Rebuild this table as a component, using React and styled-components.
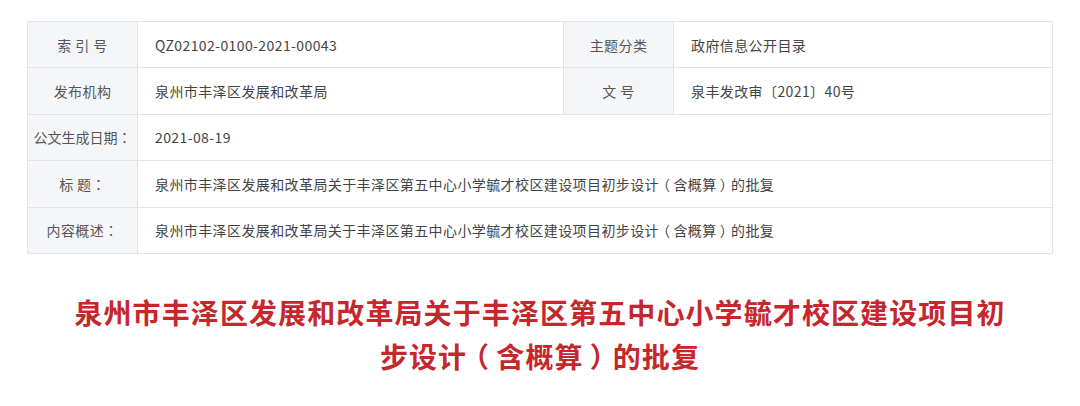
import React from "react";
import styled, { createGlobalStyle } from "styled-components";

const GlobalStyle = createGlobalStyle`
  html, body {
    margin: 0;
    padding: 0;
    background: #fff;
  }
  body {
    font-family: "Noto Sans CJK SC", "Open Sans", sans-serif;
  }
`;

const Page = styled.div`
  padding: 21px 27px 0 27px;
  width: 1080px;
  box-sizing: border-box;
`;

const Table = styled.div`
  display: grid;
  grid-template-columns: 110px 426px 110px 1fr;
  border-top: 1px solid #e4e4e4;
  border-left: 1px solid #e4e4e4;
  width: 1026px;
  box-sizing: border-box;
`;

const Cell = styled.div`
  height: 46.4px;
  box-sizing: border-box;
  display: flex;
  align-items: center;
  border-right: 1px solid #e4e4e4;
  border-bottom: 1px solid #e4e4e4;
  font-size: 14px;
  letter-spacing: 0.4px;
  white-space: nowrap;
  grid-column: ${(p) => (p.$span ? `span ${p.$span}` : "auto")};
`;

const Label = styled(Cell)`
  justify-content: center;
  background: #f5f6f7;
  color: #555;
  letter-spacing: ${(p) => (p.$tight ? "0" : "0.4px")};
`;

const Value = styled(Cell)`
  padding-left: 17px;
  color: #444;
`;

const Title = styled.h1`
  margin: 36px auto 0;
  width: 940px;
  text-align: center;
  color: #c5272d;
  font-size: 28px;
  letter-spacing: 1.1px;
  line-height: 44px;
  font-weight: 700;
`;

// full-width colon centred in its box, as in the reference
const Colon = styled.span`
  font-family: "Noto Sans CJK TC", "Noto Sans CJK SC", sans-serif;
`;

// full-width brackets drawn in the middle of their box
const Paren = styled.span`
  margin-left: ${(p) => (p.$close ? "0.22em" : "-0.22em")};
  margin-right: ${(p) => (p.$close ? "-0.22em" : "0.22em")};
`;

const TitleText = () => (
  <>
    泉州市丰泽区发展和改革局关于丰泽区第五中心小学毓才校区建设项目初步设计<Paren>（</Paren>含概算<Paren $close>）</Paren>的批复
  </>
);

export default function App() {
  return (
    <Page>
      <GlobalStyle />
      <Table>
        <Label>索 引 号</Label>
        <Value>QZ02102-0100-2021-00043</Value>
        <Label>主题分类</Label>
        <Value>政府信息公开目录</Value>

        <Label>发布机构</Label>
        <Value>泉州市丰泽区发展和改革局</Value>
        <Label>文 号</Label>
        <Value>泉丰发改审〔2021〕40号</Value>

        <Label $tight>公文生成日期<Colon>：</Colon></Label>
        <Value $span={3}>2021-08-19</Value>

        <Label>标 题<Colon>：</Colon></Label>
        <Value $span={3}><TitleText /></Value>

        <Label>内容概述<Colon>：</Colon></Label>
        <Value $span={3}><TitleText /></Value>
      </Table>
      <Title><TitleText /></Title>
    </Page>
  );
}
